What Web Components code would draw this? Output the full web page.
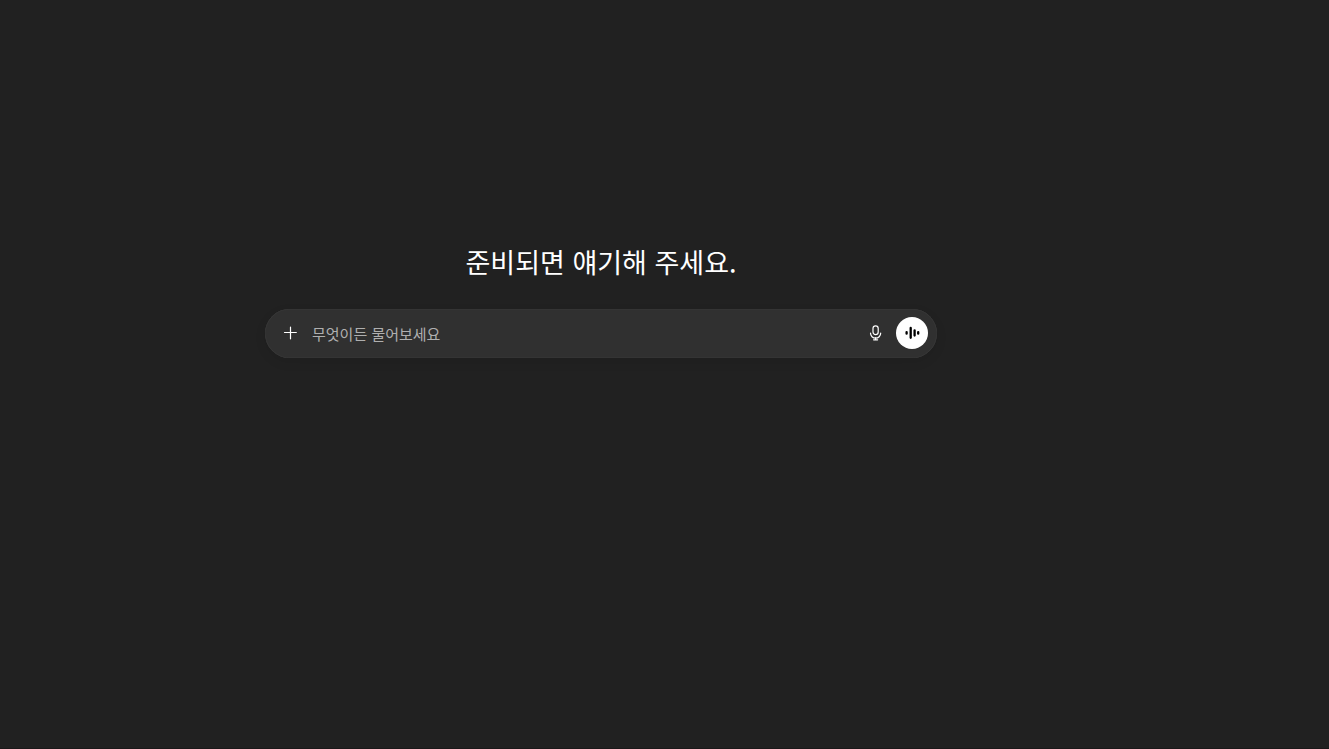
<!DOCTYPE html>
<html lang="ko">
<head>
<meta charset="utf-8">
<meta name="viewport" content="width=device-width, initial-scale=1">
<title>Chat</title>
<style>
  html, body { margin: 0; min-height: 100%; background: #212121; }
  body { font-family: "Noto Sans CJK KR", sans-serif; color: #fff; }
</style>
</head>
<body>
<chat-home>
  <chat-heading slot="heading">준비되면 얘기해 주세요.</chat-heading>
  <chat-composer placeholder="무엇이든 물어보세요"></chat-composer>
</chat-home>

<script>
class ChatHome extends HTMLElement {
  constructor() {
    super();
    this.attachShadow({ mode: "open" }).innerHTML = `
      <style>
        :host { display: block; box-sizing: border-box; min-height: 100vh; padding: 240px 127px 0 0; border-bottom: 1px solid #1b1819; }
        main { display: flex; flex-direction: column; gap: 25px; width: min(672px, 100% - 32px); margin: 0 auto; }
      </style>
      <main><slot name="heading"></slot><slot></slot></main>`;
  }
}

class ChatHeading extends HTMLElement {
  constructor() {
    super();
    this.attachShadow({ mode: "open" }).innerHTML = `
      <style>
        :host { display: block; text-align: center; }
        h1 { margin: 0; font-size: 27px; line-height: 44px; font-weight: 400; }
      </style>
      <h1><slot></slot></h1>`;
  }
}

class IconButton extends HTMLElement {
  constructor() {
    super();
    this.attachShadow({ mode: "open" }).innerHTML = `
      <style>
        :host { display: block; flex: none; }
        button { display: grid; place-items: center; width: 32px; height: 32px; padding: 0; border: 0; border-radius: 50%; background: transparent; color: #fff; cursor: pointer; }
        :host([filled]) button { background: #fff; color: #000; }
      </style>
      <button type="button"><slot></slot></button>`;
  }
  connectedCallback() {
    this.shadowRoot.querySelector("button").setAttribute("aria-label", this.getAttribute("label"));
  }
}

class ChatComposer extends HTMLElement {
  constructor() {
    super();
    this.attachShadow({ mode: "open" }).innerHTML = `
      <style>
        :host { display: block; }
        form { display: flex; align-items: center; gap: 4px; box-sizing: border-box; min-height: 49px; padding: 8px 9px 9px; border-radius: 25px; background: #303030; box-shadow: inset 0 0 1px rgba(255,255,255,.2), 0 4px 12px rgba(0,0,0,.08); }
        input { flex: 1; min-width: 0; height: 32px; margin: 0; padding: 0 0 0 2px; border: 0; outline: 0; background: none; color: #fff; font: 400 15px/24px "Noto Sans CJK KR", sans-serif; }
        input::placeholder { color: #afafaf; opacity: 1; }
        svg { display: block; }
      </style>
      <form>
        <icon-button label="추가">
          <svg width="16" height="16" viewBox="0 0 16 16" fill="none" stroke="currentColor" stroke-width="1.2" stroke-linecap="round"><path d="M8.5 2.2v11.6M2.5 7.5h11.8"/></svg>
        </icon-button>
        <input type="text" aria-label="메시지">
        <icon-button label="음성 입력">
          <svg width="16" height="16" viewBox="0 0 16 16" fill="none" stroke="currentColor" stroke-width="1.2" stroke-linecap="round" stroke-linejoin="round"><rect x="5" y=".9" width="5.2" height="8.8" rx="2.6"/><path d="M2.5 8.1a5.1 5.1 0 0 0 10.2 0M7.6 12.5v2.2M5.6 14.8h4"/></svg>
        </icon-button>
        <icon-button label="음성 모드" filled>
          <svg width="16" height="16" viewBox="0 0 16 16" fill="none" stroke="currentColor" stroke-linecap="round"><path stroke-width="2.3" d="M2.6 7.1v1.6M6.7 3v9.8M10.6 5.3v5.2M14.2 7.1v1.6"/></svg>
        </icon-button>
      </form>`;
  }
  connectedCallback() {
    this.shadowRoot.querySelector("input").placeholder = this.getAttribute("placeholder");
  }
}

customElements.define("icon-button", IconButton);
customElements.define("chat-heading", ChatHeading);
customElements.define("chat-composer", ChatComposer);
customElements.define("chat-home", ChatHome);
</script>
</body>
</html>
